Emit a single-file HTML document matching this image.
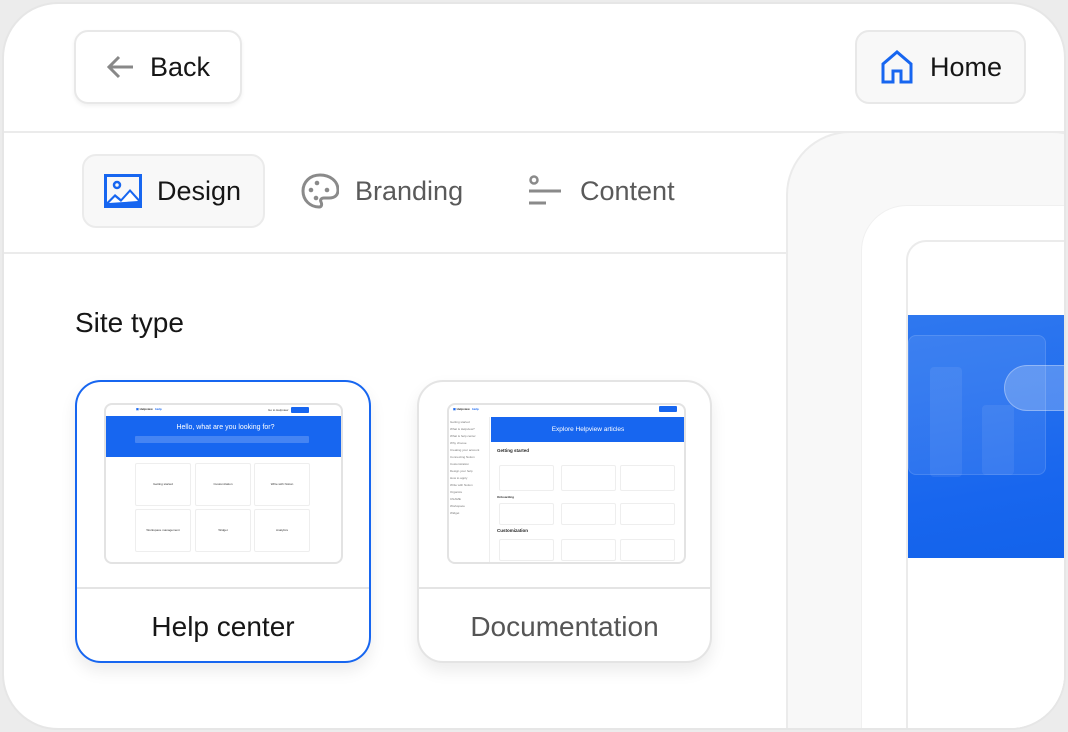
<!DOCTYPE html>
<html><head><meta charset="utf-8"><style>
*{box-sizing:border-box;margin:0;padding:0}
html,body{width:1068px;height:732px;overflow:hidden}
body{background:#ececec;font-family:"Liberation Sans",Arial,sans-serif;position:relative}
.a{position:absolute}
.frame{left:2px;top:2px;width:1064px;height:728px;background:#fff;border:2px solid #e6e6e6;border-radius:56px;overflow:hidden}
.btn{border:2px solid #e8e8e8;border-radius:14px;background:#fff;box-shadow:0 2px 4px rgba(0,0,0,.06);display:flex;align-items:center;font-size:27px;color:#161616}
.tab{display:flex;align-items:center;font-size:27px;color:#5a5a5a}
.card{background:#fff;border:2px solid #e4e4e4;border-radius:26px;overflow:hidden;box-shadow:0 8px 16px rgba(0,0,0,.08)}
.lbl{position:absolute;left:0;right:0;bottom:0;height:74px;border-top:2px solid #e4e4e4;text-align:center;line-height:76px;font-size:28px}
.th{position:absolute;border:2px solid #e3e3e3;border-radius:8px;background:#fff;overflow:hidden}
.t{font-size:3px;color:#333}
.mc{position:absolute;border:1px solid #eee;border-radius:2px;background:#fff;text-align:center}
</style></head><body>
<div class="a frame">
<div class="a" style="left:0;top:127px;width:1060px;height:2px;background:#ebebeb"></div>
<div class="a" style="left:0;top:248px;width:784px;height:2px;background:#ebebeb"></div>
<div class="a" style="left:782px;top:127px;width:330px;height:597px;background:#f8f8f8;border:2px solid #ebebeb;border-bottom:none;border-radius:64px 64px 0 0"></div>
<div class="a" style="left:857px;top:201px;width:260px;height:523px;background:#fff;border-radius:46px 46px 0 0;border:1px solid #f0f0f0;border-bottom:none"></div>
<div class="a" style="left:902px;top:236px;width:200px;height:488px;background:#fff;border:2px solid #ebebeb;border-bottom:none;border-radius:20px 20px 0 0;overflow:hidden">
<div class="a" style="left:0;top:73px;width:200px;height:243px;background:linear-gradient(170deg,#2f78ef,#1866ee 70%,#1262ea)">
<div class="a" style="left:0;top:20px;width:138px;height:140px;border-radius:8px;background:rgba(255,255,255,.08);border:1px solid rgba(255,255,255,.12)"></div>
<div class="a" style="left:22px;top:52px;width:32px;height:110px;border-radius:4px;background:rgba(255,255,255,.07)"></div>
<div class="a" style="left:74px;top:90px;width:32px;height:70px;border-radius:4px;background:rgba(255,255,255,.07)"></div>
<div class="a" style="left:96px;top:50px;width:110px;height:46px;border-radius:23px;background:rgba(255,255,255,.22);border:1px solid rgba(255,255,255,.3)"></div>
</div></div>
</div>

<div class="a btn" style="left:74px;top:30px;width:168px;height:74px;padding-left:30px">
<svg width="30" height="26" viewBox="0 0 30 26" style="margin-right:14px"><path d="M27 13H4M13 3L3 13l10 10" stroke="#888" stroke-width="3" fill="none"/></svg>Back</div>

<div class="a btn" style="left:855px;top:30px;width:171px;height:74px;padding-left:23px;background:#f8f8f8;box-shadow:none">
<svg width="34" height="34" viewBox="0 0 34 34" style="margin-right:16px"><path d="M3 32V14L17 2l14 12v18H21V21h-8v11z" stroke="#1766f0" stroke-width="3" fill="none"/></svg>Home</div>

<div class="a tab" style="left:82px;top:154px;width:183px;height:74px;border:2px solid #ebebeb;border-radius:14px;background:#f8f8f8;padding-left:20px;color:#161616">
<svg width="38" height="34" viewBox="0 0 38 34" style="margin-right:15px"><rect x="1.5" y="1.5" width="35" height="31" fill="none" stroke="#1766f0" stroke-width="3"/><circle cx="13" cy="11" r="3" fill="none" stroke="#1766f0" stroke-width="2.5"/><path d="M2 29l9-9 6 5 9-10 10 11v6H2z" fill="#1766f0"/><path d="M5 29l6-6 6 5 9-10 8 9" fill="#fff"/></svg>Design</div>

<div class="a tab" style="left:301px;top:154px;height:74px">
<svg width="38" height="36" viewBox="0 0 38 36" style="margin-right:16px"><path d="M19 2C9 2 2 9 2 18s7 16 16 16c3 0 3-3 2-5s0-4 3-4h5c6 0 9-3 9-8C37 8 29 2 19 2z" fill="none" stroke="#8a8a8a" stroke-width="3"/><circle cx="10" cy="17" r="2.3" fill="#8a8a8a"/><circle cx="15" cy="25" r="2.3" fill="#8a8a8a"/><circle cx="16" cy="10" r="2.3" fill="#8a8a8a"/><circle cx="26" cy="17" r="2.3" fill="#8a8a8a"/></svg>Branding</div>

<div class="a tab" style="left:528px;top:154px;height:74px">
<svg width="34" height="34" viewBox="0 0 34 34" style="margin-right:18px"><circle cx="6" cy="6" r="3.5" fill="none" stroke="#8a8a8a" stroke-width="2.5"/><path d="M1 17h32M1 29h17" stroke="#8a8a8a" stroke-width="3"/></svg>Content</div>

<div class="a" style="left:75px;top:307px;font-size:28px;color:#161616">Site type</div>

<div class="a card" style="left:75px;top:380px;width:296px;height:283px;border-color:#1766f0">
<div class="th" style="left:27px;top:21px;width:239px;height:161px">
 <div class="a t" style="left:30px;top:2px;font-weight:bold;color:#1766f0">▣ <span style="color:#333">Helpview</span> &nbsp; Help</div>
 <div class="a t" style="left:162px;top:3px">Go to Helpview</div>
 <div class="a" style="left:185px;top:2px;width:18px;height:6px;background:#1766f0;border-radius:1px"></div>
 <div class="a" style="left:0;top:11px;width:239px;height:41px;background:#1766f0"><div style="color:#fff;font-size:7px;text-align:center;margin-top:8px">Hello, what are you looking for?</div><div style="margin:5px 0 0 29px;width:174px;height:7px;background:rgba(255,255,255,.2);border-radius:1px"></div></div>
 <div class="mc" style="left:29px;top:58px;width:56px;height:43px"><div class="t" style="margin-top:18px">Getting started</div></div>
 <div class="mc" style="left:89px;top:58px;width:56px;height:43px"><div class="t" style="margin-top:18px">Customization</div></div>
 <div class="mc" style="left:148px;top:58px;width:56px;height:43px"><div class="t" style="margin-top:18px">Write with Notion</div></div>
 <div class="mc" style="left:29px;top:104px;width:56px;height:43px"><div class="t" style="margin-top:18px">Workspace management</div></div>
 <div class="mc" style="left:89px;top:104px;width:56px;height:43px"><div class="t" style="margin-top:18px">Widget</div></div>
 <div class="mc" style="left:148px;top:104px;width:56px;height:43px"><div class="t" style="margin-top:18px">Analytics</div></div>
</div>
<div class="lbl" style="color:#161616">Help center</div>
</div>

<div class="a card" style="left:417px;top:380px;width:295px;height:283px">
<div class="th" style="left:28px;top:21px;width:239px;height:161px">
 <div class="a t" style="left:4px;top:2px;font-weight:bold;color:#1766f0">▣ <span style="color:#333">Helpview</span> &nbsp; Help</div>
 <div class="a" style="left:210px;top:1px;width:18px;height:6px;background:#1766f0;border-radius:1px"></div>
 <div class="a" style="left:1px;top:14px;width:38px;height:140px;overflow:hidden">
  <div class="t" style="line-height:7px;color:#777">Getting started<br>What is Helpview?<br>What is help center<br>Why choose<br>Creating your account<br>Connecting Notion<br>Customization<br>Design your help<br>How to apply<br>Write with Notion<br>Organize<br>CNAME<br>Workspace<br>Widget</div>
 </div>
 <div class="a" style="left:40px;top:12px;width:1px;height:145px;background:#eee"></div>
 <div class="a" style="left:42px;top:12px;width:194px;height:25px;background:#1766f0;color:#fff;font-size:6.5px;text-align:center;line-height:25px">Explore Helpview articles</div>
 <div class="a" style="left:48px;top:43px;font-size:4.5px;font-weight:bold;color:#222">Getting started</div>
 <div class="mc" style="left:50px;top:60px;width:55px;height:26px"></div><div class="mc" style="left:112px;top:60px;width:55px;height:26px"></div><div class="mc" style="left:171px;top:60px;width:55px;height:26px"></div>
 <div class="a t" style="left:48px;top:90px;font-weight:bold">Onboarding</div>
 <div class="mc" style="left:50px;top:98px;width:55px;height:22px"></div><div class="mc" style="left:112px;top:98px;width:55px;height:22px"></div><div class="mc" style="left:171px;top:98px;width:55px;height:22px"></div>
 <div class="a" style="left:48px;top:123px;font-size:4.5px;font-weight:bold;color:#222">Customization</div>
 <div class="mc" style="left:50px;top:134px;width:55px;height:22px"></div><div class="mc" style="left:112px;top:134px;width:55px;height:22px"></div><div class="mc" style="left:171px;top:134px;width:55px;height:22px"></div>
</div>
<div class="lbl" style="color:#555">Documentation</div>
</div>
</body></html>
